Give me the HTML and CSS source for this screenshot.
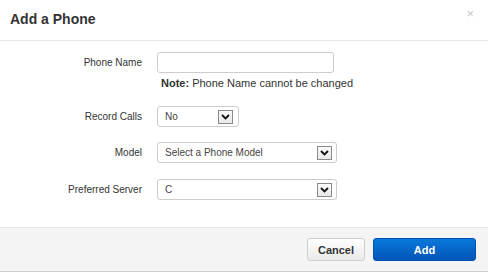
FILE: index.html
```html
<!DOCTYPE html>
<html>
<head>
<meta charset="utf-8">
<link rel="stylesheet" href="styles.css">
</head>
<body>
<div class="modal">
  <div class="header">
    <h3 class="title">Add a Phone</h3>
    <span class="close">&#215;</span>
  </div>
  <div class="body">
    <div class="row first">
      <label class="label">Phone Name</label>
      <div class="field">
        <div class="input"></div>
        <div class="note"><b>Note:</b> Phone Name cannot be changed</div>
      </div>
    </div>
    <div class="row record">
      <label class="label">Record Calls</label>
      <div class="select small">
        <span class="val">No</span>
        <span class="arrow"><svg width="9" height="6" viewBox="0 0 9 6"><path d="M1 1 L4.5 4.5 L8 1" fill="none" stroke="#111" stroke-width="1.8"/></svg></span>
      </div>
    </div>
    <div class="row">
      <label class="label">Model</label>
      <div class="select wide">
        <span class="val">Select a Phone Model</span>
        <span class="arrow"><svg width="9" height="6" viewBox="0 0 9 6"><path d="M1 1 L4.5 4.5 L8 1" fill="none" stroke="#111" stroke-width="1.8"/></svg></span>
      </div>
    </div>
    <div class="row server">
      <label class="label">Preferred Server</label>
      <div class="select wide">
        <span class="val">C</span>
        <span class="arrow"><svg width="9" height="6" viewBox="0 0 9 6"><path d="M1 1 L4.5 4.5 L8 1" fill="none" stroke="#111" stroke-width="1.8"/></svg></span>
      </div>
    </div>
  </div>
  <div class="footer">
    <button class="btn cancel">Cancel</button>
    <button class="btn add">Add</button>
  </div>
</div>
</body>
</html>
```
FILE: styles.css
```css
* { box-sizing: border-box; }
html, body { margin: 0; padding: 0; background: #fff; }
body { font-family: "Liberation Sans", Arial, sans-serif; color: #333; }
.modal { width: 488px; height: 272px; display: flex; flex-direction: column; background: #fff; }
.header { height: 41px; border-bottom: 1px solid #e6e6e6; display: flex; justify-content: space-between; align-items: flex-start; padding: 0 10px; }
.title { margin: 11px 0 0; font-size: 14px; font-weight: bold; color: #333; line-height: 17px; }
.close { margin-top: 7px; margin-right: 4px; font-size: 13px; color: #c8c8c8; line-height: 14px; }
.body { flex: 1; padding-top: 11px; }
.row { display: grid; grid-template-columns: 142px auto; column-gap: 15px; align-items: center; }
.row.first { align-items: start; }
.row.first .label { line-height: 21px; }
.row.record { margin-top: 17px; }
.row + .row { margin-top: 15px; }
.row.record { margin-top: 17px; }
.row.server { margin-top: 16px; }
.label { font-size: 10px; text-align: right; color: #333; }
.input { width: 177px; height: 21px; border: 1px solid #ccc; border-radius: 3px; background: #fff; }
.note { margin-top: 4px; margin-left: 4px; font-size: 11px; line-height: 12px; color: #333; white-space: nowrap; }
.note b { color: #333; }
.select { height: 21px; border: 1px solid #ccc; border-radius: 3px; background: #fff; display: flex; align-items: center; justify-content: space-between; padding: 0 4px 0 7px; }
.select.small { width: 82px; padding-right: 5px; }
.select.wide { width: 180px; }
.val { font-size: 10px; color: #444; }
.arrow { width: 15px; height: 14px; border: 1px solid #8a8a8a; background: linear-gradient(#fafafa, #e8e8e8); display: flex; align-items: center; justify-content: center; }
.arrow svg { display: block; }
.footer { height: 45px; border-top: 1px solid #e4e4e4; border-bottom: 1px solid #cfcfcf; background: #f4f4f4; display: flex; justify-content: flex-end; align-items: flex-start; gap: 8px; padding: 10px 12px 0 0; }
.btn { height: 23px; border-radius: 3px; font-family: "Liberation Sans", Arial, sans-serif; font-size: 11px; font-weight: bold; padding: 0; cursor: pointer; }
.cancel { width: 58px; border: 1px solid #cfcfcf; background: linear-gradient(#ffffff, #e9e9e9); color: #333; }
.add { width: 103px; border: 1px solid #0052ad; background: linear-gradient(#0a78dc, #0054b6); color: #fff; }
```
